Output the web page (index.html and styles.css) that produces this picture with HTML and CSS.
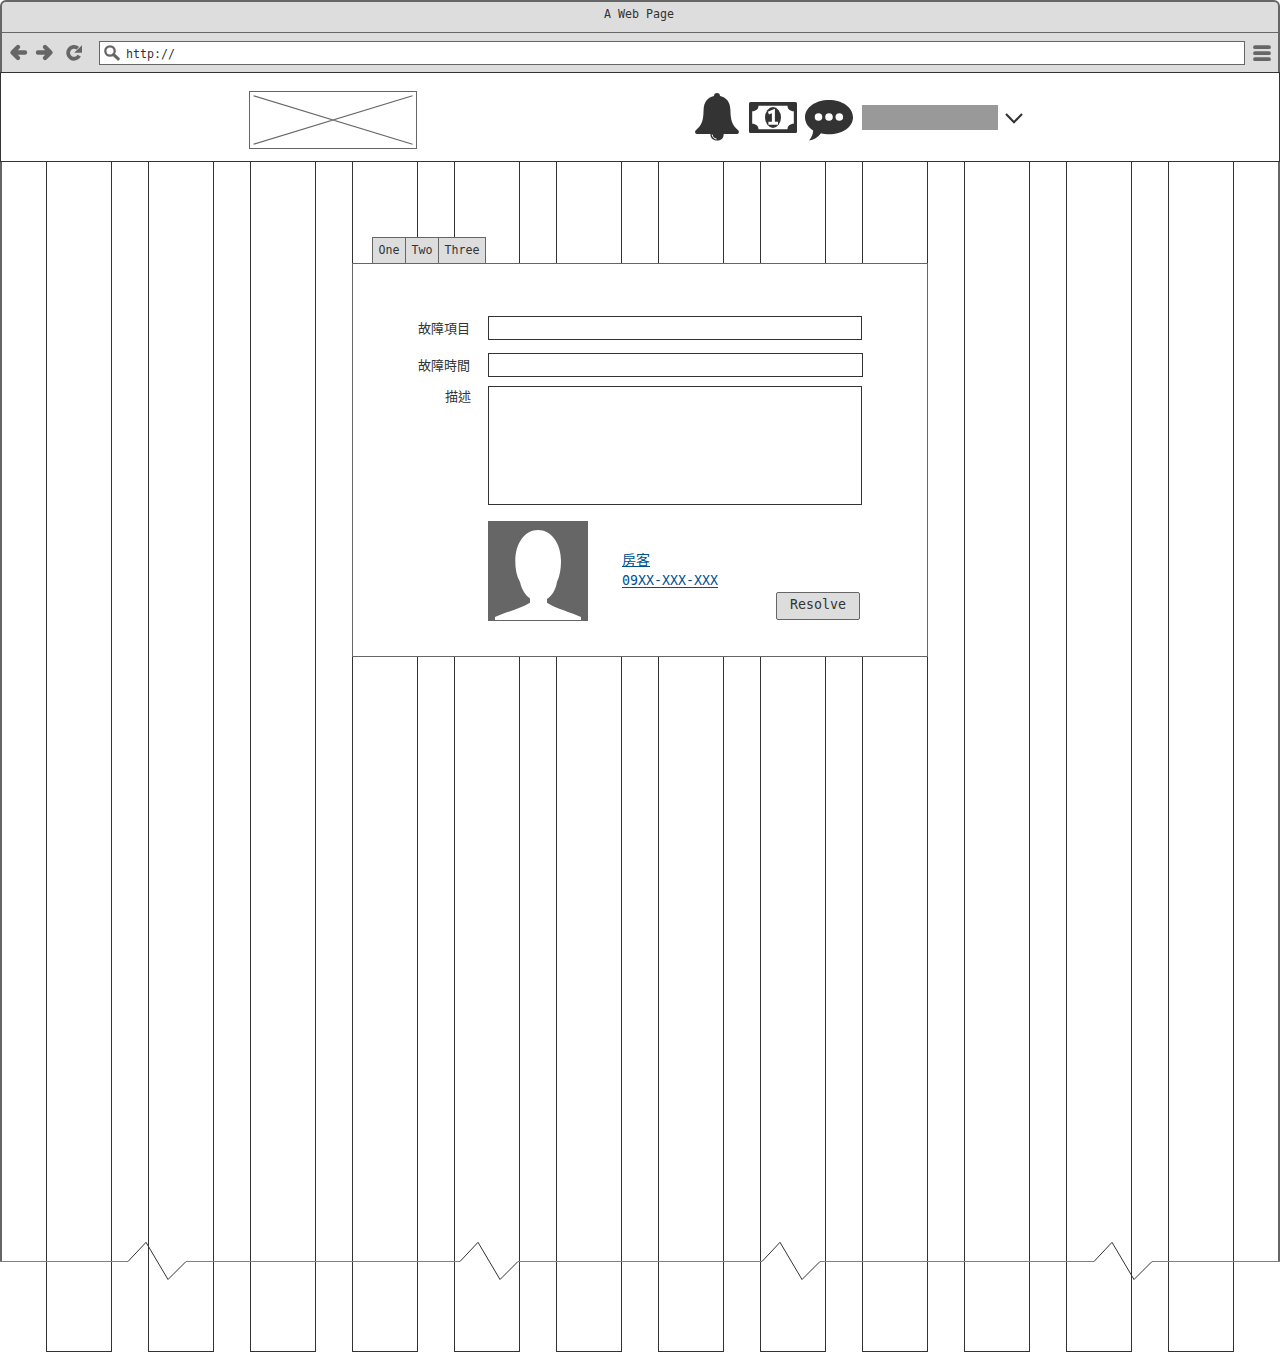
FILE: index.html
```html
<!DOCTYPE html>
<html lang="zh-Hant">
<head>
<meta charset="utf-8">
<title>A Web Page</title>
<link rel="stylesheet" href="styles.css">
</head>
<body>
<div class="stage">
  <div class="columns">
    <i></i><i></i><i></i><i></i><i></i><i></i><i></i><i></i><i></i><i></i><i></i><i></i>
  </div>
  <div class="browser">
    <div class="titlebar">A Web Page</div>
    <div class="toolbar">
      <svg class="nav" width="90" height="40" viewBox="0 0 90 40">
        <path d="M18 14 L12.5 19.5 L18 25 M14.5 19.5 H25" class="arrow"/>
        <path d="M45 14 L50.5 19.5 L45 25 M48.5 19.5 H38" class="arrow"/>
        <path d="M79.2 22.6 A5.9 5.9 0 1 1 77.8 15.3" class="reload"/>
        <path d="M82 12.2 V19.8 H74.2 Z" fill="#666"/>
      </svg>
      <div class="address">
        <svg width="17" height="18" viewBox="0 0 17 18">
          <circle cx="6" cy="6" r="4.7" fill="none" stroke="#666" stroke-width="2.3"/>
          <path d="M9.6 9.6 L14.2 13.9" stroke="#666" stroke-width="3.2" stroke-linecap="round"/>
        </svg>
        <span>http://</span>
      </div>
      <svg class="menu" width="18" height="18" viewBox="0 0 18 18">
        <path d="M2 2.2 H16 M2 8.2 H16 M2 14.2 H16" stroke="#666" stroke-width="3.8" stroke-linecap="round"/>
      </svg>
    </div>
    <header class="header">
      <svg class="logo" width="168" height="58" viewBox="0 0 168 58">
        <rect x=".5" y=".5" width="167" height="57" fill="#fff" stroke="#666"/>
        <path d="M4.5 4.8 L163.5 53.2 M4.5 53.2 L163.5 4.8" stroke="#666" stroke-width="1.2"/>
      </svg>
      <div class="actions">
        <svg width="44" height="48" viewBox="0 0 44 48">
          <path fill="#333" d="M22 0 C23.9 0 25 1.2 25 3 C32 4.6 35.2 9.5 35.4 17 C35.7 27 36.5 31.5 43.4 37.5 C44.4 38.8 44 41 42 41 H28.6 C29 44.8 26 47.6 22 47.6 C18 47.6 15 44.8 15.5 41 H2 C0 41 -.4 38.8 .6 37.5 C7.5 31.5 8.3 27 8.6 17 C8.8 9.5 12 4.6 19 3 C19 1.2 20.1 0 22 0Z"/>
          <path d="M17.2 41.6 C17.4 44.2 19.2 45.8 21.6 46" fill="none" stroke="#fff" stroke-width="1"/>
        </svg>
        <svg width="48" height="31" viewBox="0 0 48 31">
          <rect width="48" height="31" rx="1.5" fill="#333"/>
          <path fill="#fff" d="M9.5 3.8 H38.5 C38.5 7 41 9.3 44.8 9.3 V21.7 C41 21.7 38.5 24 38.5 27.2 H9.5 C9.5 24 7 21.7 3.2 21.7 V9.3 C7 9.3 9.5 7 9.5 3.8Z"/>
          <ellipse cx="24" cy="15.5" rx="8" ry="10.4" fill="#333"/>
          <path d="M19.4 11.2 L24.4 9 V21.2 M19.4 21.2 H29" fill="none" stroke="#fff" stroke-width="3"/>
        </svg>
        <svg width="48" height="41" viewBox="0 0 48 41">
          <path fill="#333" d="M24 0 C37.5 0 48 7.5 48 17.2 C48 27 37.5 34.2 24 34.2 C21 34.2 18.5 33.9 16 33.2 C13 37.4 8.7 40 4 40.5 C6.6 37.5 8 34.2 8.2 30.5 C3 27.3 0 22.5 0 17.2 C0 7.5 10.5 0 24 0Z"/>
          <g fill="#fff"><circle cx="13.5" cy="17" r="3.8"/><circle cx="24" cy="17" r="3.8"/><circle cx="34.3" cy="17" r="3.8"/></g>
        </svg>
        <div class="account"></div>
        <svg class="chevron" width="18" height="11" viewBox="0 0 18 11">
          <path d="M1 1 L9 9.2 L17 1" fill="none" stroke="#333" stroke-width="2.1"/>
        </svg>
      </div>
    </header>
    <main class="content">
      <nav class="tabs"><span>One</span><span>Two</span><span>Three</span></nav>
      <section class="panel">
        <div class="row item"><label>故障項目</label><div class="field"></div></div>
        <div class="row time"><label>故障時間</label><div class="field wide"></div></div>
        <div class="row description"><label>描述</label><div class="field"></div></div>
        <div class="contact">
          <svg width="100" height="100" viewBox="0 0 100 100">
            <rect width="100" height="100" fill="#666"/>
            <path fill="#fff" d="M50 9 C63 9 73 22 73 40 C73 48 71.8 55 69 61 C67.6 69 64.5 74 59 78 V81.8 C69 88 82 91 93 96 V99 H7 V96 C18 91 32 88 42 81.8 V77.5 C37 74 33.5 68 32 61 C28.5 55 27.3 48 27.3 40 C27.3 22 37 9 50 9Z"/>
          </svg>
          <div class="links"><a>房客</a><a>09XX-XXX-XXX</a></div>
          <div class="button">Resolve</div>
        </div>
      </section>
    </main>
    <svg class="tear" width="1280" height="42" viewBox="0 0 1280 42">
      <path d="M0 21.5 H128 M186 21.5 H460 M518 21.5 H762 M820 21.5 H1094 M1152 21.5 H1280" stroke="#808080"/>
      <path d="M128 21.5 L146 2.3 L168 39.5 L186 21.5 M460 21.5 L478 2.3 L500 39.5 L518 21.5 M762 21.5 L780 2.3 L802 39.5 L820 21.5 M1094 21.5 L1112 2.3 L1134 39.5 L1152 21.5" fill="none" stroke="#333"/>
    </svg>
  </div>
</div>
</body>
</html>
```
FILE: styles.css
```css
* { box-sizing: border-box; }
body {
  margin: 0;
  background: #fff;
  color: #333;
  font: 11.63px/16px "DejaVu Sans Mono", "Noto Sans CJK TC", monospace;
}
svg { display: block; flex: none; }

.stage { display: grid; width: 1280px; height: 1352px; }
.columns, .browser { grid-area: 1 / 1; }
.columns {
  display: grid;
  grid-template-columns: repeat(12, 66px);
  gap: 36px;
  padding: 161px 46px 0;
}
.columns i { border: 1px solid #333; }

.browser { position: relative; height: 1262px; display: flex; flex-direction: column; }
.titlebar {
  height: 33px;
  padding-top: 4px;
  padding-right: 2px;
  border: 2px solid #666;
  border-bottom-width: 1px;
  border-radius: 6px 6px 0 0;
  background: #ddd;
  line-height: 17px;
  text-align: center;
}
.toolbar {
  display: flex;
  height: 39px;
  padding-right: 6px;
  border: solid #666;
  border-width: 0 2px;
  background: #ddd;
}
.nav { margin-left: -2px; }
.arrow { fill: none; stroke: #666; stroke-width: 4.4; stroke-linecap: round; stroke-linejoin: round; }
.reload { fill: none; stroke: #666; stroke-width: 3.8; }
.address {
  display: flex;
  width: 1146px;
  height: 24px;
  margin: 8px 8px 0 9px;
  padding: 3px 4px;
  gap: 5px;
  border: 1px solid #666;
  background: #fff;
}
.address span { line-height: 18px; }
.menu { margin-top: 12px; }

.header {
  display: flex;
  height: 90px;
  padding: 18px 0 0 248px;
  border: 1px solid #333;
  background: #fff;
}
.actions { display: flex; align-items: center; height: 48px; margin: 2px 0 0 278px; }
.actions svg:nth-child(2) { margin-left: 10px; }
.actions svg:nth-child(3) { margin: 6px 0 0 8px; }
.account { width: 136px; height: 25px; margin-left: 9px; background: #999; }
.chevron { margin-left: 7px; margin-top: 2px; }

.content {
  flex: 1;
  padding: 75px 0 0 350px;
  border: solid #666;
  border-width: 0 2px;
}
.tabs { display: flex; height: 26px; padding-left: 20px; }
.tabs span {
  width: 34px;
  height: 27px;
  margin-right: -1px;
  padding-top: 4px;
  border: 1px solid #666;
  background: #ddd;
  text-align: center;
}
.tabs span:last-child { width: 48px; }
.panel {
  width: 576px;
  height: 394px;
  padding-top: 52px;
  border: 1px solid #666;
  background: #fff;
}
.row { display: flex; }
.row label {
  width: 117px;
  margin-right: 18px;
  text-align: right;
  font-size: 13px;
  line-height: 25px;
}
.row.item, .row.time { height: 24px; }
.field { width: 374px; height: 24px; border: 1px solid #333; }
.field.wide { width: 375px; }
.time { margin-top: 13px; }
.description { margin-top: 9px; }
.description label { width: 118px; margin-right: 17px; line-height: 21px; }
.description .field { height: 119px; }

.contact { display: flex; margin: 16px 0 0 135px; }
.links {
  display: flex;
  flex-direction: column;
  width: 154px;
  margin-left: 34px;
  padding-top: 29px;
}
.links a {
  align-self: flex-start;
  font-size: 13.29px;
  line-height: 20px;
  color: #00508c;
  text-decoration: underline;
  text-underline-offset: 2px;
}
.links a:first-child { margin-bottom: 1px; font-size: 14px; text-underline-offset: 1px; }
.button {
  width: 84px;
  height: 28px;
  margin-top: 71px;
  border: 1px solid #666;
  border-radius: 2px;
  background: #ddd;
  font-size: 13.29px;
  line-height: 24px;
  text-align: center;
}
.tear { position: absolute; left: 0; top: 1240px; }
```
